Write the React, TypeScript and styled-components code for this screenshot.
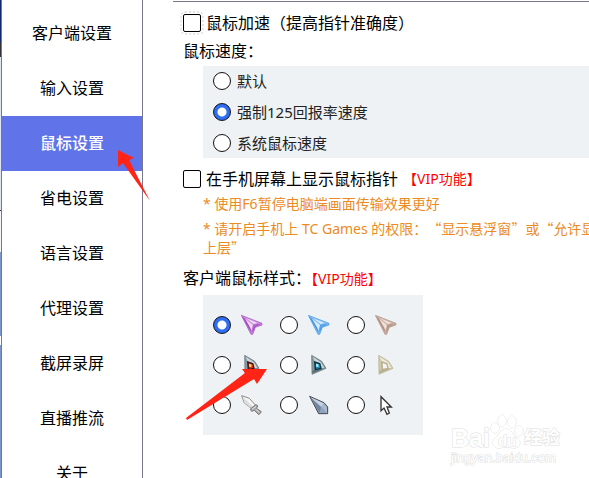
import React from "react";
import styled, { createGlobalStyle } from "styled-components";

const GlobalStyle = createGlobalStyle`
  * { box-sizing: border-box; }
  body {
    margin: 0;
    background: #fff;
    color: #000;
    font: 16px/28px "Noto Sans", "Noto Sans CJK SC", sans-serif;
  }
`;

const Page = styled.div`
  position: relative;
  display: flex;
  height: 100vh;
  overflow: hidden;
`;

const Backdrop = styled.div`
  flex: 0 0 1px;
  background: linear-gradient(
    #14286e 0 42px, #33343a 42px 57px, #dfe5f0 57px 210px, #33343a 210px 211px,
    #f4f6fa 211px 252px, #7f97c8 252px 336px, #fff 336px 345px, #7f97c8 345px
  );
`;

const Sidebar = styled.nav`
  flex: 0 0 142px;
  display: flex;
  flex-direction: column;
  padding-top: 6px;
  border: solid #77778c;
  border-width: 0 1px;
`;

const NavItem = styled.button<{ $active: boolean }>`
  flex: 0 0 55px;
  border: 0;
  padding: 0 0 2px;
  font: inherit;
  font-weight: ${(p) => (p.$active ? 500 : 400)};
  color: ${(p) => (p.$active ? "#fff" : "#000")};
  background: ${(p) => (p.$active ? "#6073e8" : "transparent")};
`;

const Main = styled.main`
  flex: 1;
  min-width: 0;
  overflow: hidden;
  margin: 1px 0 0 30px;
  padding: 7px 0 0 10px;
  border-top: 1px solid #77778c;
  white-space: nowrap;
`;

const CheckRow = styled.div`
  display: flex;
  align-items: center;
  gap: 5px;
`;

const CheckBox = styled.input`
  appearance: none;
  flex: none;
  width: 18px;
  height: 18px;
  margin: 0;
  border: 1px solid #000;
  border-radius: 2px;
  background: #fff;
  &[data-focus="true"] {
    outline: 2px dotted #e6e6e6;
    outline-offset: 1px;
  }
`;

const Radio = styled.input`
  appearance: none;
  flex: none;
  width: 18px;
  height: 18px;
  margin: 0;
  border: 1px solid #111;
  border-radius: 50%;
  background: #fff;
  &:checked {
    background: radial-gradient(circle, #fff 4px, #2f6df2 5px);
  }
`;

const Heading = styled.div`
  line-height: 28px;
`;

const Vip = styled.span`
  color: #f00;
  font-size: 14px;
`;

const SpeedPanel = styled.div`
  display: grid;
  gap: 1px;
  margin: 1px 0 7px 20px;
  padding-left: 10px;
  background: #eef2f5;
`;

const SpeedOption = styled.label`
  display: flex;
  align-items: center;
  gap: 6px;
  height: 30px;
  font-size: 15px;
  color: #222;
`;

const Hints = styled.div`
  display: grid;
  gap: 6px;
  margin: 1px 0 7px 20px;
  font-size: 14px;
  line-height: 19px;
  color: #ec8b24;
  text-spacing-trim: space-all;
`;

const Hint = styled.p`
  margin: 0;
`;

const Wide = styled.span`
  font-family: "Noto Sans CJK SC", sans-serif;
`;

const StylePanel = styled.div`
  display: grid;
  grid-template-columns: repeat(3, 67px);
  grid-auto-rows: 40px;
  width: 220px;
  margin: 2px 0 0 20px;
  padding: 10px;
  background: #eef2f5;
`;

const StyleOption = styled.label`
  display: flex;
  align-items: center;
  gap: 10px;
`;

const Overlay = styled.svg`
  position: absolute;
  inset: 0;
  width: 100%;
  height: 100%;
  pointer-events: none;
`;

const Watermark = styled.div`
  position: absolute;
  right: 28px;
  bottom: 12px;
  width: 110px;
  white-space: nowrap;
  font-family: "Liberation Sans", "Noto Sans CJK SC", sans-serif;
  color: #fff;
  -webkit-text-stroke: 1px #dedede;
  paint-order: stroke fill;
`;

const Brand = styled.div`
  display: flex;
  align-items: flex-end;
  font-weight: 700;
  font-size: 25px;
  line-height: 24px;
`;

const BrandCn = styled.span`
  font-size: 18px;
`;

const Site = styled.div`
  font-size: 13px;
  line-height: 16px;
`;

type Tone = [string, string, string];

const Icon = ({ children }: { children: React.ReactNode }) => (
  <svg width="22" height="22" viewBox="0 0 66 66" aria-hidden="true">{children}</svg>
);

const Dart = ({ t }: { t: Tone }) => (
  <Icon>
    <path d="M1 4L63 28V33L43 40L35 61H30Z" fill={t[1]} stroke={t[0]} strokeWidth="2" />
    <path d="M6 7L58 28L38 32Z" fill={t[1]} />
    <path d="M14 12L50 27L38 30Z" fill={t[2]} />
    <path d="M3 7L22 24L32 58Z" fill={t[0]} />
    <path d="M12 14L36 33L32 48Z" fill={t[2]} />
    <path d="M36 33L60 29L42 39L34 56Z" fill={t[0]} />
    <path d="M38 35L50 32L40 37L36 46Z" fill={t[1]} />
  </Icon>
);

const Blade = ({ t, core }: { t: Tone; core: Tone }) => (
  <Icon>
    <path d="M11 4L41 22L54 43L12 61Z" fill={t[1]} stroke={t[0]} strokeWidth="2" />
    <path d="M14 8L39 25L49 42L42 43L36 27L20 22Z" fill={t[2]} />
    <path d="M13 50L42 44L50 43L14 58Z" fill={t[0]} />
    <path d="M18 21L37 28L41 45L20 49Z" fill={core[0]} />
    <path d="M23 27L34 31L37 42L24 44Z" fill={core[1]} />
    <path d="M24 29L32 32L31 38L25 39Z" fill={core[2]} />
  </Icon>
);

const Sword = () => (
  <Icon>
    <path d="M2 5L25 13L43 33L32 43L10 27Z" fill="#f7f7f7" stroke="#888" strokeWidth="3" />
    <path d="M4 7L37 38L31 42L11 27Z" fill="#dedede" />
    <path d="M28 45L45 32L51 36L46 43L61 53L54 62L40 49L32 52Z" fill="#aaa" stroke="#777" strokeWidth="3" />
    <path d="M33 46L45 37M45 46L55 55" stroke="#e5e5e5" strokeWidth="3" />
  </Icon>
);

const Shard = () => (
  <Icon>
    <path d="M5 7L48 26L59 39V59H32Z" fill="#8fa3bc" stroke="#45474f" strokeWidth="3" />
    <path d="M8 10L47 28L40 39Z" fill="#c6d2df" />
    <path d="M9 12L39 40L34 56Z" fill="#70849e" />
    <path d="M47 28L57 40V57L40 39Z" fill="#a6b9cd" />
  </Icon>
);

const Pointer = () => (
  <Icon>
    <path d="M18 8V50L27 42L36 61L43 57L36 39H49Z" fill="#fff" stroke="#333" strokeWidth="4" />
  </Icon>
);

const cursors: { name: string; icon: React.ReactNode }[] = [
  { name: "紫色", icon: <Dart t={["#a445c2", "#c68ada", "#f0d8f8"]} /> },
  { name: "蓝色", icon: <Dart t={["#4298e2", "#7fbaf2", "#d8edff"]} /> },
  { name: "棕色", icon: <Dart t={["#b08f80", "#cbb0a3", "#f0e1da"]} /> },
  { name: "红宝石", icon: <Blade t={["#596b75", "#8d9b9f", "#d0dadd"]} core={["#40151a", "#d7301c", "#ffe45a"]} /> },
  { name: "蓝宝石", icon: <Blade t={["#566c72", "#84989b", "#ccd9da"]} core={["#0c3043", "#168eb4", "#b8f2ff"]} /> },
  { name: "象牙", icon: <Blade t={["#b5ad8c", "#d0c9ad", "#eeeade"]} core={["#b5ad8c", "#f1f2ee", "#f5f6f4"]} /> },
  { name: "剑", icon: <Sword /> },
  { name: "碎片", icon: <Shard /> },
  { name: "指针", icon: <Pointer /> },
];

const nav = ["客户端设置", "输入设置", "鼠标设置", "省电设置", "语言设置", "代理设置", "截屏录屏", "直播推流", "关于"];
const speeds = ["默认", "强制125回报率速度", "系统鼠标速度"];

export default function App() {
  return (
    <Page>
      <GlobalStyle />
      <Backdrop />
      <Sidebar>
        {nav.map((n) => (
          <NavItem key={n} $active={n === "鼠标设置"}>{n}</NavItem>
        ))}
      </Sidebar>
      <Main>
        <CheckRow>
          <CheckBox type="checkbox" id="accel" data-focus="true" />
          <label htmlFor="accel">鼠标加速（提高指针准确度）</label>
        </CheckRow>
        <Heading>鼠标速度：</Heading>
        <SpeedPanel>
          {speeds.map((s, i) => (
            <SpeedOption key={s}>
              <Radio type="radio" name="speed" defaultChecked={i === 1} />
              {s}
            </SpeedOption>
          ))}
        </SpeedPanel>
        <CheckRow>
          <CheckBox type="checkbox" id="show" />
          <label htmlFor="show">在手机屏幕上显示鼠标指针</label>
          <Vip>【VIP功能】</Vip>
        </CheckRow>
        <Hints>
          <Hint>* 使用F6暂停电脑端画面传输效果更好</Hint>
          <Hint>
            * 请开启手机上 TC Games 的权限：<Wide>“</Wide>显示悬浮窗<Wide>”</Wide>或<Wide>“</Wide>允许显示
            <br />
            上层<Wide>”</Wide>
          </Hint>
        </Hints>
        <Heading>客户端鼠标样式：<Vip>【VIP功能】</Vip></Heading>
        <StylePanel>
          {cursors.map((c, i) => (
            <StyleOption key={c.name}>
              <Radio type="radio" name="cursor" defaultChecked={i === 0} aria-label={c.name} />
              {c.icon}
            </StyleOption>
          ))}
        </StylePanel>
      </Main>
      <Watermark>
        <Brand>
          Bai
          <svg width="34" height="36" viewBox="0 0 34 36" fill="#fff" stroke="#dedede">
            <ellipse cx="5" cy="14" rx="4" ry="5" />
            <ellipse cx="12" cy="7" rx="4" ry="6" />
            <ellipse cx="22" cy="8" rx="4" ry="6" />
            <ellipse cx="29" cy="17" rx="4" ry="5" />
            <path d="M16 15C22 15 22 21 27 24C33 28 29 35 23 34C18 33 14 33 10 34C3 35 1 28 5 24C10 20 10 15 16 15Z" />
            <text x="8" y="32" fontSize="15" fontWeight="700">du</text>
          </svg>
          <BrandCn>经验</BrandCn>
        </Brand>
        <Site>jingyan.baidu.com</Site>
      </Watermark>
      <Overlay fill="#ff2416">
        <path d="M118 150L134 158L129 160L150 201L123 163L118 167Z" />
        <path d="M267 369L257 384L254 379L187 420L186 418L245 373L242 369Z" />
      </Overlay>
    </Page>
  );
}
